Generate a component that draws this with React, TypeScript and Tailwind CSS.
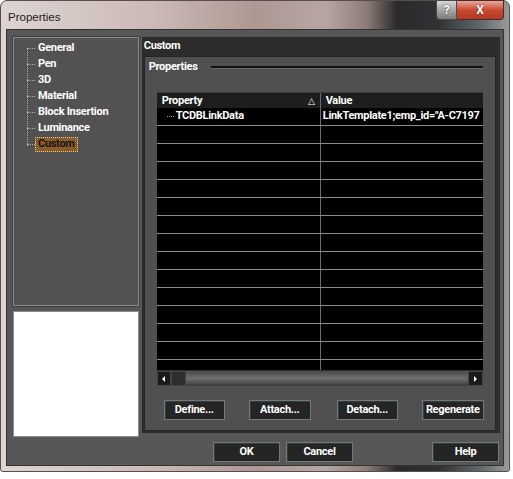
import type { ReactNode } from 'react';

const treeItems = ['General', 'Pen', '3D', 'Material', 'Block Insertion', 'Luminance', 'Custom'];

function DlgButton({ children, className = '' }: { children: ReactNode; className?: string }) {
  return (
    <div
      className={`flex h-[20px] items-center justify-center border border-[#6c7b7b] bg-[#252525] text-[11px] font-bold text-white shadow-[inset_1px_1px_0_#3a3a3a] ${className}`}
    >
      {children}
    </div>
  );
}

function TreePanel() {
  return (
    <div className="h-[269px] border border-[#8d8d8d] bg-[#525252] shadow-[0_0_0_1px_#3e3e3e]">
      <div className="relative ml-[13px] mt-[2px]">
        <div className="absolute left-0 top-[8px] h-[98px] border-l border-dotted border-[#b0b0b0]" />
        {treeItems.map((item) => (
          <div key={item} className="flex h-[16px] items-center">
            <span className="w-[8px] border-t border-dotted border-[#b0b0b0]" />
            {item === 'Custom' ? (
              <span className="flex h-[15px] items-center border border-dotted border-[#d8c8a8] bg-[#8d5c26] px-[2px] text-[11px] font-bold text-[#151515]">
                {item}
              </span>
            ) : (
              <span className="px-[3px] text-[11px] font-bold text-white">{item}</span>
            )}
          </div>
        ))}
      </div>
    </div>
  );
}

function PropertyTable() {
  const rows = Array.from({ length: 14 }, (_, i) => i);
  return (
    <div className="mx-[12px] mt-[23px] flex h-[294px] flex-col border-t border-[#3c3c3c] bg-black">
      <div className="grid h-[15px] shrink-0 grid-cols-[164px_1fr] bg-[#1e1e1e] text-[11px] font-bold text-white">
        <div className="flex items-center justify-between border-r border-[#6a6a6a] pl-[5px] pr-[5px]">
          <span>Property</span>
          <span className="text-[9px] font-normal">△</span>
        </div>
        <div className="flex items-center pl-[5px]">Value</div>
      </div>
      {rows.map((i) => (
        <div key={i} className="grid h-[18px] shrink-0 grid-cols-[164px_1fr] border-b border-[#8b8b8b]">
          <div className="flex items-center border-r border-[#6a6a6a] pl-[10px] text-[11px] font-bold text-white">
            {i === 0 && (
              <>
                <span className="mr-[2px] w-[7px] border-t border-dotted border-[#9a9a9a]" />
                <span>TCDBLinkData</span>
              </>
            )}
          </div>
          <div className="flex items-center overflow-hidden whitespace-nowrap pl-[2px] text-[11px] font-bold text-white">
            {i === 0 && 'LinkTemplate1;emp_id="A-C7197'}
          </div>
        </div>
      ))}
      <div className="grid flex-1 grid-cols-[164px_1fr]">
        <div className="border-r border-[#6a6a6a]" />
        <div />
      </div>
      <div className="flex h-[16px] shrink-0 border-t border-[#333]">
        <div className="flex w-[14px] items-center justify-center border border-[#444] bg-[#1b1b1b]">
          <span className="h-0 w-0 border-y-[3px] border-r-[3px] border-y-transparent border-r-white" />
        </div>
        <div className="w-[15px] border border-[#444] bg-[#2e2e2e]" />
        <div className="flex-1 bg-gradient-to-b from-[#4c4c4c] via-[#6e6e6e] to-[#3c3c3c]" />
        <div className="flex w-[15px] items-center justify-center border border-[#444] bg-[#1b1b1b]">
          <span className="h-0 w-0 border-y-[3px] border-l-[3px] border-y-transparent border-l-white" />
        </div>
      </div>
    </div>
  );
}

export default function App() {
  return (
    <div className="h-[479px] w-[513px] bg-white font-['Roboto','Liberation_Sans',sans-serif] tracking-[-0.3px]">
      <div className="flex h-[472px] w-[510px] flex-col rounded-t-[7px] rounded-b-[3px] border border-[#5a4e4c] bg-[linear-gradient(90deg,#ddd4d2_0%,#cbbab6_30%,#ae9893_50%,#b6a6a2_64%,#8c7c78_72%,#2a2a2a_78%,#2f3234_86%,#5d666a_94%,#9a9a9a_100%)] px-[5px] pb-[5px]">
        <div className="flex h-[28px] shrink-0 items-start justify-between">
          <span className="pl-[2px] pt-[10px] font-['Liberation_Sans',sans-serif] text-[11.5px] leading-[12px] tracking-normal text-[#1c1c1c]">
            Properties
          </span>
          <div className="-mt-px flex">
            <div className="flex h-[20px] w-[21px] items-center justify-center rounded-bl-[4px] border border-[#4a4a4a] bg-gradient-to-b from-[#d8d8d8] via-[#a8a8a8] to-[#7c7c7c] text-[12px] font-bold text-white [text-shadow:0_0_2px_#333]">
              ?
            </div>
            <div className="flex h-[20px] w-[47px] items-center justify-center rounded-br-[4px] border border-l-0 border-[#4a2a22] bg-gradient-to-b from-[#e7a89a] via-[#c9482f] to-[#b33a24] text-[12px] font-bold text-white [text-shadow:0_0_2px_#522]">
              X
            </div>
          </div>
        </div>
        <div className="flex flex-1 flex-col border border-[#333] bg-[#575757] pl-[6px] pr-[3px] pt-[7px]">
          <div className="flex items-start gap-[3px]">
            <div className="flex w-[126px] flex-col gap-[5px]">
              <TreePanel />
              <div className="h-[126px] border border-[#8d8d8d] bg-white" />
            </div>
            <div className="flex h-[396px] w-[359px] flex-col bg-[#2c2c2c] pb-[2px] pl-[2px] pr-[4px]">
              <div className="flex h-[19px] shrink-0 items-center text-[11px] font-bold text-white">Custom</div>
              <div className="flex flex-1 flex-col border border-[#262626] bg-[#505050]">
                <div className="flex h-[12px] items-center pl-[4px] pr-[12px] pt-[8px]">
                  <span className="text-[11px] font-bold text-white">Properties</span>
                  <span className="ml-[13px] flex-1 border-t-2 border-b border-t-[#101010] border-b-[#6c6c6c]" />
                </div>
                <PropertyTable />
                <div className="mt-[14px] flex pl-[19px]">
                  <DlgButton className="w-[61px]">Define...</DlgButton>
                  <DlgButton className="ml-[24px] w-[62px]">Attach...</DlgButton>
                  <DlgButton className="ml-[26px] w-[61px]">Detach...</DlgButton>
                  <DlgButton className="ml-[24px] w-[62px]">Regenerate</DlgButton>
                </div>
              </div>
            </div>
          </div>
          <div className="mt-[5px] flex">
            <DlgButton className="ml-[200px] w-[67px]">OK</DlgButton>
            <DlgButton className="ml-[6px] w-[67px]">Cancel</DlgButton>
            <DlgButton className="ml-[79px] w-[67px]">Help</DlgButton>
          </div>
        </div>
      </div>
    </div>
  );
}
